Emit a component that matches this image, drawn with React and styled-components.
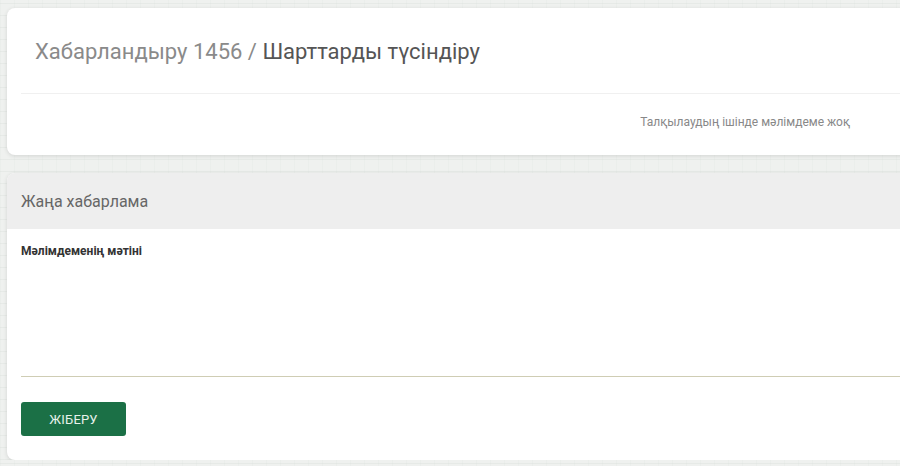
import React from 'react';
import styled, { createGlobalStyle } from 'styled-components';

const GlobalStyle = createGlobalStyle`
  html, body {
    margin: 0;
    padding: 0;
    overflow: hidden;
  }
  body {
    font-family: Roboto, "Noto Sans", sans-serif;
    background-color: #eff1ef;
    background-image:
      repeating-linear-gradient(0deg, rgba(205, 212, 208, 0.25) 0 1px, transparent 1px 12px),
      repeating-linear-gradient(90deg, rgba(215, 222, 218, 0.18) 0 1px, transparent 1px 14px);
  }
`;

const Page = styled.div`
  width: 920px;
  padding: 8px 0 0 7px;
  display: flex;
  flex-direction: column;
  gap: 18px;
`;

const Card = styled.section`
  background: #fff;
  border-radius: 8px;
  box-shadow: 0 1px 4px rgba(0, 0, 0, 0.12);
  overflow: hidden;
`;

const TopCard = styled(Card)`
  height: 147px;
  padding: 0 14px;
`;

const Title = styled.h1`
  margin: 0;
  padding: 31px 0 0 14px;
  height: 54px;
  font-size: 22px;
  font-weight: 400;
  color: #8a8a8a;
  & span {
    color: #555;
  }
`;

const Divider = styled.hr`
  margin: 0;
  border: none;
  border-top: 1px solid #f0f0f0;
`;

const Empty = styled.p`
  margin: 0;
  padding: 21px 0 0;
  width: 829px;
  text-align: right;
  font-size: 12px;
  color: #888;
`;

const FormCard = styled(Card)`
  height: 287px;
  display: flex;
  flex-direction: column;
`;

const FormHeader = styled.header`
  background: #eeeeee;
  height: 56px;
  display: flex;
  align-items: center;
  padding: 0 14px;
  font-size: 16px;
  color: #666;
`;

const FormBody = styled.div`
  padding: 15px 14px 0;
  display: flex;
  flex-direction: column;
`;

const Label = styled.label`
  font-size: 12px;
  font-weight: 700;
  color: #333;
`;

const TextArea = styled.textarea`
  margin-top: 6px;
  height: 112px;
  border: none;
  border-bottom: 1px solid #cfcdb4;
  outline: none;
  resize: none;
  font-family: inherit;
  padding: 0;
`;

const Button = styled.button`
  margin-top: 25px;
  align-self: flex-start;
  width: 105px;
  height: 34px;
  border: none;
  border-radius: 3px;
  background: #1b7046;
  color: #e6f2ea;
  font-family: Roboto, sans-serif;
  font-size: 13px;
  font-weight: 400;
  letter-spacing: 0.2px;
  cursor: pointer;
`;

export default function App() {
  return (
    <>
      <GlobalStyle />
      <Page>
        <TopCard>
          <Title>
            Хабарландыру 1456 / <span>Шарттарды түсіндіру</span>
          </Title>
          <Divider />
          <Empty>Талқылаудың ішінде мәлімдеме жоқ</Empty>
        </TopCard>
        <FormCard>
          <FormHeader>Жаңа хабарлама</FormHeader>
          <FormBody>
            <Label>Мәлімдеменің мәтіні</Label>
            <TextArea />
            <Button>ЖІБЕРУ</Button>
          </FormBody>
        </FormCard>
      </Page>
    </>
  );
}
